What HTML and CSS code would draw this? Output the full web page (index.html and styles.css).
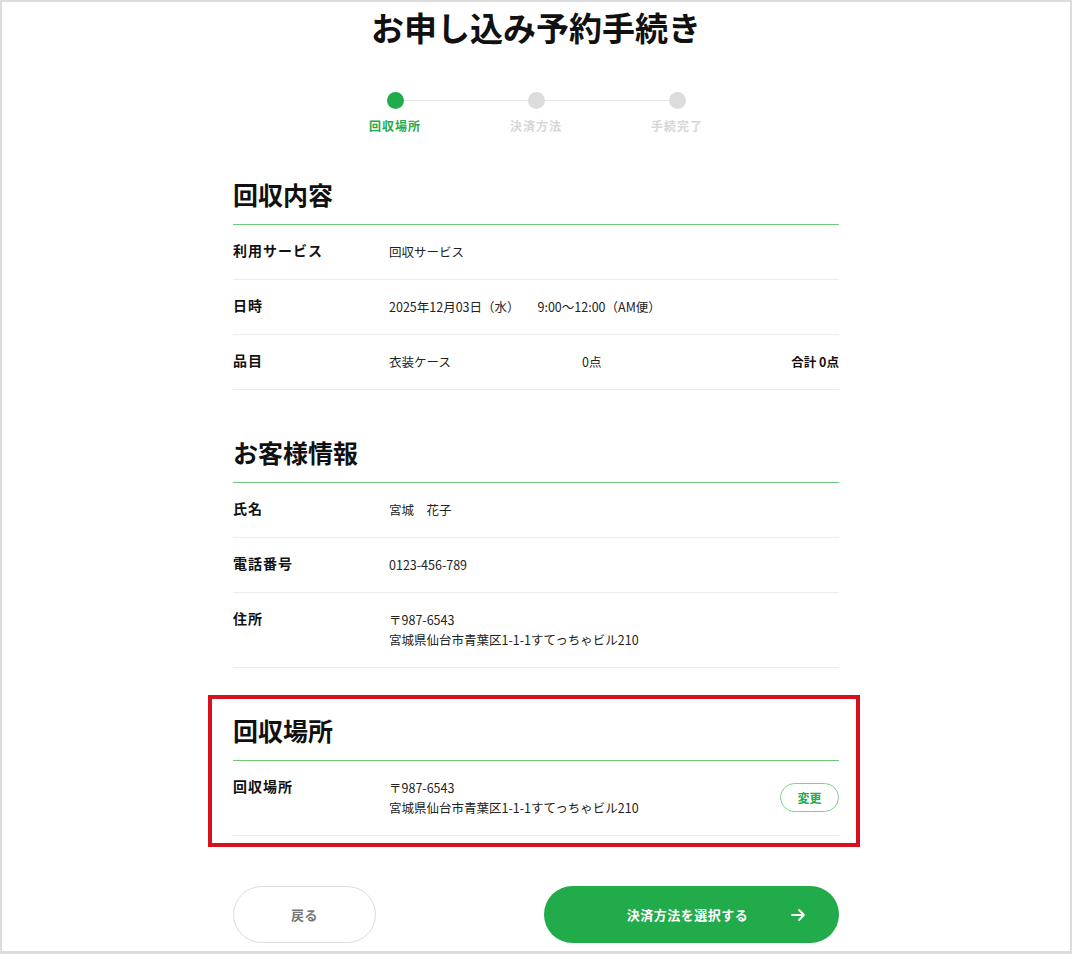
FILE: index.html
```html
<!DOCTYPE html>
<html lang="ja">
<head>
<meta charset="utf-8">
<title>お申し込み予約手続き</title>
<link rel="stylesheet" href="styles.css">
</head>
<body>
<div class="frame">
  <main class="page">
    <h1 class="title">お申し込み予約手続き</h1>

    <ol class="stepper">
      <li class="step is-active"><span class="dot"></span><span class="step-label">回収場所</span></li>
      <li class="step"><span class="dot"></span><span class="step-label">決済方法</span></li>
      <li class="step"><span class="dot"></span><span class="step-label">手続完了</span></li>
    </ol>

    <section class="block">
      <h2 class="block-title">回収内容</h2>
      <div class="row">
        <div class="label">利用サービス</div>
        <div class="value">回収サービス</div>
      </div>
      <div class="row">
        <div class="label">日時</div>
        <div class="value">2025年12月03日（水）<span class="time">9:00〜12:00（AM便）</span></div>
      </div>
      <div class="row">
        <div class="label">品目</div>
        <div class="value items">
          <span class="item-name">衣装ケース</span>
          <span class="item-count">0点</span>
          <span class="item-total">合計 0点</span>
        </div>
      </div>
    </section>

    <section class="block">
      <h2 class="block-title">お客様情報</h2>
      <div class="row">
        <div class="label">氏名</div>
        <div class="value">宮城　花子</div>
      </div>
      <div class="row">
        <div class="label">電話番号</div>
        <div class="value">0123-456-789</div>
      </div>
      <div class="row">
        <div class="label">住所</div>
        <div class="value">〒987-6543<br>宮城県仙台市青葉区1-1-1すてっちゃビル210</div>
      </div>
    </section>

    <section class="block block-highlight">
      <h2 class="block-title">回収場所</h2>
      <div class="row">
        <div class="label">回収場所</div>
        <div class="value with-action">
          <span>〒987-6543<br>宮城県仙台市青葉区1-1-1すてっちゃビル210</span>
          <button class="btn-change" type="button">変更</button>
        </div>
      </div>
    </section>

    <div class="actions">
      <button class="btn-back" type="button">戻る</button>
      <button class="btn-next" type="button">決済方法を選択する
        <svg class="arrow" width="16" height="16" viewBox="0 0 16 16" aria-hidden="true"><path d="M2 8H14M9 3L14 8L9 13" fill="none" stroke="#fff" stroke-width="1.8" stroke-linecap="round" stroke-linejoin="round"/></svg>
      </button>
    </div>
  </main>
</div>
</body>
</html>
```

FILE: styles.css
```css
* { box-sizing: border-box; }

html, body {
  margin: 0;
  padding: 0;
  background: #fff;
}

body {
  font-family: "Noto Sans CJK JP", "Noto Sans", sans-serif;
  color: #222;
}

.frame {
  width: 1072px;
  height: 954px;
  border: 2px solid #dcdcdc;
  border-bottom-width: 3px;
  overflow: hidden;
  background: #fff;
}

.page {
  width: 606px;
  margin: 0 auto;
  padding-top: 5px;
}

.title {
  margin: 0;
  text-align: center;
  font-size: 33px;
  line-height: 40px;
  font-weight: 700;
  color: #111;
}

.stepper {
  list-style: none;
  margin: 45px 0 0;
  padding: 0;
  display: grid;
  grid-template-columns: repeat(3, 141px);
  justify-content: center;
}

.step {
  position: relative;
  display: flex;
  flex-direction: column;
  align-items: center;
}

.step:not(:last-child)::after {
  content: "";
  position: absolute;
  left: 50%;
  top: 8px;
  width: 100%;
  height: 1px;
  background: #e6e6e6;
  z-index: 0;
}

.dot {
  position: relative;
  z-index: 1;
  width: 17px;
  height: 17px;
  border-radius: 50%;
  background: #dcdcdc;
}

.step-label {
  margin-top: 9px;
  font-size: 12px;
  line-height: 16px;
  font-weight: 700;
  letter-spacing: 1px;
  color: #d6d6d6;
}

.step.is-active .dot { background: #22ab4b; }
.step.is-active .step-label { color: #22ab4b; }

.block { margin-top: 46px; }
.block + .block { margin-top: 48px; }

.block-title {
  margin: 0;
  font-size: 25px;
  line-height: 28px;
  font-weight: 700;
  color: #111;
  padding-bottom: 16px;
  border-bottom: 1px solid #6dc97c;
}

.row {
  display: flex;
  padding: 15px 0 17px;
  border-bottom: 1px solid #ebebeb;
}

.label {
  width: 156px;
  flex: none;
  font-size: 14px;
  letter-spacing: 1px;
  line-height: 20px;
  font-weight: 700;
  color: #111;
}

.value {
  flex: 1;
  margin-top: 2px;
  font-size: 12.5px;
  line-height: 20px;
  color: #222;
}

.time { margin-left: 18px; }

.items { display: flex; }
.item-name { width: 193px; }
.item-count { flex: 1; }
.item-total { font-weight: 700; color: #111; }

.with-action {
  display: flex;
  justify-content: space-between;
  align-items: center;
}

.btn-change {
  width: 59px;
  height: 29px;
  border: 1.5px solid #7fd18c;
  border-radius: 15px;
  background: #fff;
  color: #22ab4b;
  font-family: inherit;
  font-size: 12px;
  font-weight: 700;
  padding: 0;
  margin-top: -2px;
}

.block-highlight { position: relative; }

.block-highlight::after {
  content: "";
  position: absolute;
  left: -25px;
  right: -21px;
  top: -21px;
  bottom: -11px;
  border: 4.5px solid #d7111c;
  pointer-events: none;
}

.actions {
  margin-top: 50px;
  display: flex;
  justify-content: space-between;
}

.btn-back,
.btn-next {
  height: 57px;
  border-radius: 29px;
  font-family: inherit;
  font-size: 13px;
  font-weight: 700;
  letter-spacing: 0.5px;
  padding: 0;
}

.btn-back {
  width: 143px;
  background: #fff;
  border: 1.5px solid #dcdcdc;
  color: #777;
}

.btn-next {
  position: relative;
  width: 295px;
  background: #22ab4b;
  border: none;
  color: #fff;
  padding-right: 8px;
}

.arrow {
  position: absolute;
  right: 33px;
  top: 50%;
  margin-top: -8px;
}
```
